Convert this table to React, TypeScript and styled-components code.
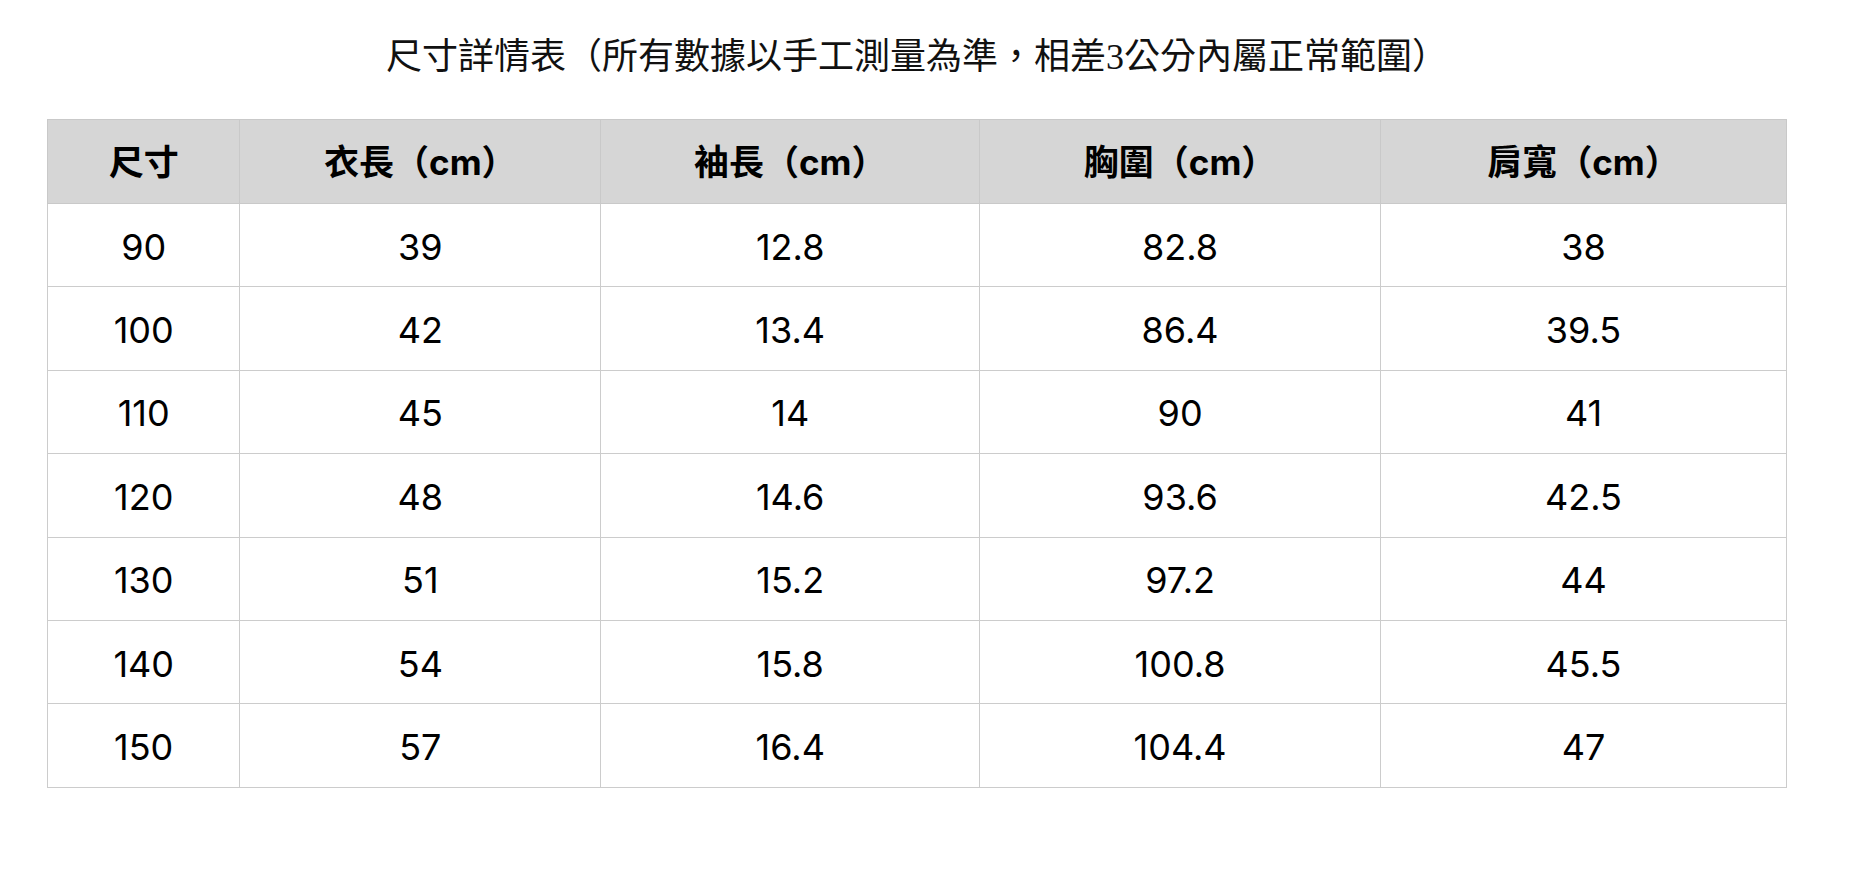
import React from "react";
import styled, { createGlobalStyle } from "styled-components";

const GlobalStyle = createGlobalStyle`
  html, body {
    margin: 0;
    padding: 0;
    background: #ffffff;
  }
  body {
    font-family: "Inter", "Noto Sans CJK TC", sans-serif;
    color: #000000;
  }
`;

const Page = styled.div`
  width: 1834px;
  box-sizing: border-box;
  padding: 0 47px;
`;

const Title = styled.h1`
  margin: 0;
  height: 112px;
  display: flex;
  align-items: center;
  justify-content: center;
  font-family: "Liberation Serif", "Noto Sans CJK TC", serif;
  font-weight: 400;
  font-size: 36px;
  color: #111111;
  padding-bottom: 6px;
  box-sizing: border-box;
`;

const Table = styled.table`
  width: 1740px;
  margin-top: 7px;
  border-collapse: collapse;
  table-layout: fixed;
`;

const HeadCell = styled.th<{ $w: number }>`
  width: ${(p) => p.$w}px;
  height: 84px;
  padding: 0 0 4px;
  box-sizing: border-box;
  background: #d6d6d6;
  border: 1px solid #c9c9c9;
  font-family: "Inter", "Noto Sans CJK TC", sans-serif;
  font-weight: 700;
  font-size: 35px;
  text-align: center;
  vertical-align: middle;
  color: #000000;
`;

const Cell = styled.td`
  height: 83.4px;
  padding: 0;
  border: 1px solid #cccccc;
  font-family: "Inter", "Noto Sans CJK TC", sans-serif;
  font-weight: 400;
  font-size: 36px;
  text-align: center;
  vertical-align: middle;
  color: #000000;
  padding-top: 3px;
  box-sizing: border-box;
`;

const columns: { label: string; w: number }[] = [
  { label: "尺寸", w: 192 },
  { label: "衣長（cm）", w: 360 },
  { label: "袖長（cm）", w: 378 },
  { label: "胸圍（cm）", w: 400 },
  { label: "肩寬（cm）", w: 405 },
];

const rows: string[][] = [
  ["90", "39", "12.8", "82.8", "38"],
  ["100", "42", "13.4", "86.4", "39.5"],
  ["110", "45", "14", "90", "41"],
  ["120", "48", "14.6", "93.6", "42.5"],
  ["130", "51", "15.2", "97.2", "44"],
  ["140", "54", "15.8", "100.8", "45.5"],
  ["150", "57", "16.4", "104.4", "47"],
];

export default function App() {
  return (
    <>
      <GlobalStyle />
      <Page>
        <Title>尺寸詳情表（所有數據以手工測量為準，相差3公分內屬正常範圍）</Title>
        <Table>
          <thead>
            <tr>
              {columns.map((c) => (
                <HeadCell key={c.label} $w={c.w}>
                  {c.label}
                </HeadCell>
              ))}
            </tr>
          </thead>
          <tbody>
            {rows.map((r) => (
              <tr key={r[0]}>
                {r.map((v, i) => (
                  <Cell key={i}>{v}</Cell>
                ))}
              </tr>
            ))}
          </tbody>
        </Table>
      </Page>
    </>
  );
}
